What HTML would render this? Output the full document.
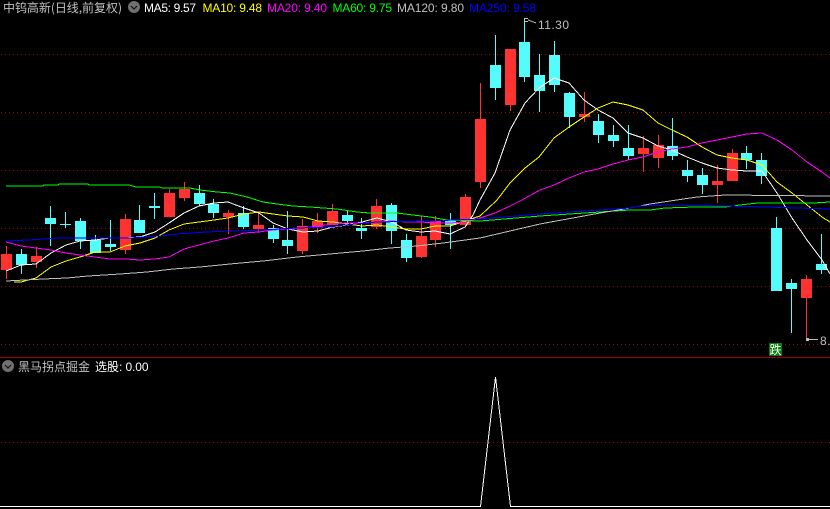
<!DOCTYPE html>
<html><head><meta charset="utf-8"><style>
html,body{margin:0;padding:0;background:#000;width:830px;height:509px;overflow:hidden}
svg{display:block}
text{font-family:"Liberation Sans","WenQuanYi Zen Hei","Noto Sans CJK SC",sans-serif;font-size:12px}
.z{font-family:"WenQuanYi Zen Hei","Noto Sans CJK SC","Liberation Sans",sans-serif}
polyline{fill:none;stroke-width:1;shape-rendering:crispEdges}
</style></head><body>
<svg width="830" height="509" viewBox="0 0 830 509" xmlns="http://www.w3.org/2000/svg">
<g stroke="#a00000" stroke-width="1" stroke-dasharray="1 3" shape-rendering="crispEdges">
<path d="M1 54.5H830M1 112.5H830M1 170.5H830M1 228.5H830M1 286.5H830M1 344.5H830M1 442.5H830"/>
</g>
<path fill="#ff3232" shape-rendering="crispEdges" d="M1 254h11v16h-11zM6 246h1v33h-1zM31 256h11v6h-11zM36 247h1v21h-1zM120 219h11v31h-11zM125 214h1v40h-1zM164 193h11v24h-11zM169 189h1v28h-1zM179 189h11v9h-11zM184 182h1v19h-1zM223 213h11v4h-11zM228 210h1v24h-1zM253 225h11v4h-11zM258 212h1v21h-1zM297 226h11v25h-11zM302 219h1v35h-1zM312 221h11v7h-11zM317 213h1v20h-1zM327 211h11v14h-11zM332 204h1v21h-1zM371 206h11v21h-11zM376 199h1v30h-1zM416 236h11v21h-11zM421 216h1v42h-1zM430 221h11v19h-11zM435 216h1v31h-1zM460 197h11v28h-11zM465 194h1v31h-1zM475 119h11v63h-11zM480 83h1v105h-1zM505 49h11v56h-11zM510 49h1v62h-1zM579 114h11v3h-11zM584 92h1v30h-1zM638 148h11v6h-11zM643 136h1v36h-1zM653 145h11v13h-11zM658 135h1v33h-1zM712 181h11v4h-11zM717 165h1v38h-1zM727 153h11v28h-11zM732 149h1v32h-1zM801 279h11v19h-11zM806 275h1v65h-1z"/>
<path fill="#54fcfc" shape-rendering="crispEdges" d="M16 254h11v11h-11zM21 249h1v25h-1zM45 218h11v6h-11zM50 206h1v40h-1zM60 224h11v1h-11zM65 212h1v16h-1zM75 221h11v20h-11zM80 218h1v31h-1zM90 240h11v13h-11zM95 235h1v18h-1zM105 244h11v3h-11zM110 220h1v31h-1zM134 220h11v13h-11zM139 205h1v28h-1zM149 206h11v2h-11zM154 193h1v26h-1zM194 193h11v11h-11zM199 185h1v21h-1zM208 204h11v9h-11zM213 199h1v19h-1zM238 213h11v14h-11zM243 206h1v23h-1zM268 228h11v11h-11zM273 225h1v18h-1zM282 240h11v6h-11zM287 211h1v43h-1zM342 215h11v6h-11zM347 211h1v12h-1zM356 228h11v3h-11zM361 218h1v21h-1zM386 205h11v26h-11zM391 203h1v41h-1zM401 240h11v18h-11zM406 234h1v28h-1zM445 220h11v5h-11zM450 213h1v36h-1zM490 65h11v23h-11zM495 35h1v65h-1zM519 42h11v35h-11zM524 18h1v64h-1zM534 75h11v16h-11zM539 54h1v58h-1zM549 55h11v30h-11zM554 41h1v51h-1zM564 93h11v24h-11zM569 92h1v36h-1zM593 121h11v14h-11zM598 114h1v29h-1zM608 135h11v6h-11zM613 125h1v22h-1zM623 148h11v8h-11zM628 125h1v35h-1zM667 146h11v10h-11zM672 118h1v42h-1zM682 170h11v6h-11zM687 160h1v22h-1zM697 175h11v10h-11zM702 168h1v26h-1zM741 153h11v7h-11zM746 146h1v23h-1zM756 160h11v16h-11zM761 153h1v31h-1zM771 228h11v63h-11zM776 217h1v11h-1zM786 283h11v6h-11zM791 279h1v54h-1zM816 264h11v6h-11zM821 234h1v40h-1z"/>

<polyline stroke="#ffffff" points="6,271 21,265 36,264 51,253 66,245 80,241 95,240 110,238 125,238 140,237 155,232 169,223 184,213 199,206 214,203 228,202 244,208 259,213 273,223 288,229 303,232 318,231 333,227 347,225 362,222 377,218 392,222 406,230 421,232 435,231 450,234 465,227 473,215 480,200 495,173 510,130 525,103 539,88 554,78 569,83 584,100 598,110 613,118 628,133 643,138 658,146 672,150 687,157 702,163 717,168 732,170 747,171 762,171 777,193 792,218 807,240 822,260 830,274"/>
<polyline stroke="#ffff00" points="14,282 21,282 36,278 51,267 66,261 80,257 95,252 110,252 125,246 140,243 155,238 169,230 184,224 199,222 214,220 228,218 244,214 259,212 273,214 288,216 303,217 318,221 333,222 347,224 362,226 377,225 392,227 406,229 421,229 435,226 450,226 465,221 480,216 497,200 510,183 525,168 539,157 554,138 569,127 584,117 598,108 613,102 628,105 643,110 658,123 672,130 687,137 702,147 717,155 732,158 747,160 762,165 777,182 792,193 807,205 822,217 830,222"/>
<polyline stroke="#ff00ff" points="6,242 21,246 36,248 51,250 66,253 80,255 95,257 110,259 125,259 140,260 155,259 169,257 184,249 199,245 214,241 228,238 244,233 259,232 273,230 288,229 303,228 318,226 333,224 347,223 362,223 377,222 392,221 406,222 421,222 435,223 450,223 465,222 480,218 495,213 510,206 522,200 540,190 554,185 569,178 584,172 598,169 613,164 628,160 643,157 658,152 672,149 687,147 702,143 717,140 732,137 747,134 762,133 777,140 792,150 807,162 822,172 830,178"/>
<polyline stroke="#00ff00" points="6,186 43,186 44,185 58,185 59,184 88,184 89,185 129,185 136,187 160,187 162,188 190,188 200,190 217,192 230,193 247,197 263,202 277,204 293,206 310,207 337,209 357,212 370,213 397,213 413,215 430,217 447,220 480,221 540,216 600,212 630,210 650,210 665,208 695,207 725,207 740,205 758,203 813,203 830,202"/>
<polyline stroke="#c0c0c0" points="6,281 43,279 67,278 88,276 120,274 147,272 173,269 200,267 230,264 263,261 297,257 330,254 363,251 390,248 417,246 443,243 480,238 540,224 600,213 630,208 650,204 670,201 697,197 725,195 830,196"/>
<polyline stroke="#0000ff" points="6,241 29,240 58,238 88,238 130,238 160,236 177,234 207,232 230,231 263,230 297,228 330,227 345,225 377,222 430,221 480,219 540,214 600,210 630,208 640,206 670,205 725,206 767,207 797,208 830,209"/>

<!-- high marker -->
<path d="M524 18h4v1h-4zM524 21h4v1h-4zM524 18h1v4h-1z" fill="#c0c0c0" shape-rendering="crispEdges"/>
<path d="M528 20L536 23" stroke="#c0c0c0" fill="none" shape-rendering="crispEdges"/>
<text x="538" y="29" fill="#c0c0c0" textLength="31">11.30</text>
<!-- low marker -->
<path d="M806 338h3v3h-3zM809 339h9v1h-9z" fill="#c0c0c0" shape-rendering="crispEdges"/>
<text x="820" y="345" fill="#c0c0c0" letter-spacing=".5">8.30</text>
<rect x="769" y="343" width="13" height="13" fill="#0a7a0a" shape-rendering="crispEdges"/>
<text class="z" x="769.5" y="354" fill="#ffffff">跌</text>

<!-- separator -->
<rect x="0" y="357" width="830" height="1" fill="#a00000" shape-rendering="crispEdges"/>

<!-- header -->
<text class="z" x="3" y="12" fill="#c0c0c0" textLength="119">中钨高新(日线,前复权)</text>
<circle cx="134" cy="7" r="6" fill="#707070"/>
<path d="M131 6L134 9L137 6" stroke="#111" stroke-width="1.2" fill="none"/>
<text x="144" y="12" fill="#ffffff" textLength="52">MA5: 9.57</text>
<text x="202.5" y="12" fill="#ffff00" textLength="59.5">MA10: 9.48</text>
<text x="267" y="12" fill="#ff00ff" textLength="60">MA20: 9.40</text>
<text x="332.5" y="12" fill="#00ff00" textLength="59.5">MA60: 9.75</text>
<text x="397" y="12" fill="#c0c0c0" textLength="67">MA120: 9.80</text>
<text x="469" y="12" fill="#0000ff" textLength="67">MA250: 9.58</text>

<!-- sub pane -->
<circle cx="8" cy="366" r="6" fill="#707070"/>
<path d="M5 365L8 368L11 365" stroke="#111" stroke-width="1.2" fill="none"/>
<text class="z" x="18" y="371" fill="#c0c0c0" textLength="72">黑马拐点掘金</text>
<text class="z" x="95" y="371" fill="#ffffff">选股</text>
<text x="119" y="371" fill="#ffffff" textLength="29.5">: 0.00</text>
<path d="M0 506.5H480.5L495.5 377L510.5 506.5H830" stroke="#ffffff" stroke-width="1" fill="none" shape-rendering="crispEdges"/>
</svg>
</body></html>
